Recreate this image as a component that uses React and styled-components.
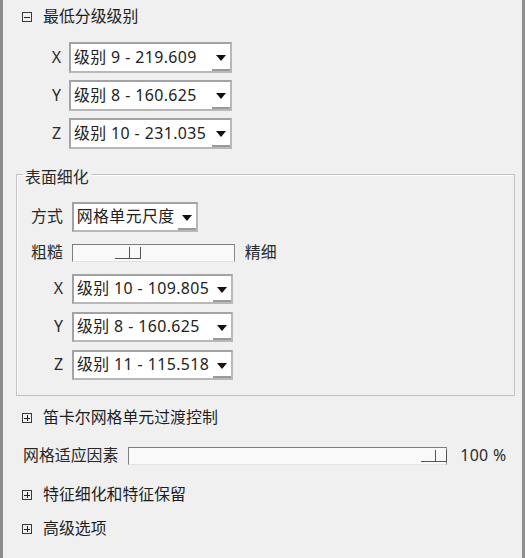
import React from "react";
import styled, { createGlobalStyle } from "styled-components";

const GlobalStyle = createGlobalStyle`
  html, body {
    margin: 0;
    padding: 0;
    background: #f0f0f0;
  }
  body {
    font-family: "Noto Sans", "Noto Sans CJK SC", sans-serif;
    color: #1e1e1e;
  }
`;

const Panel = styled.div`
  width: 525px;
  height: 558px;
  box-sizing: border-box;
  border-left: 3px solid #8b8b8b;
  border-right: 3px solid #8f8f8f;
  background: #f0f0f0;
  padding: 0 7px 0 13px;
  display: flex;
  flex-direction: column;
  font-size: 15.9px;
  overflow: hidden;
`;

const ExpandRow = styled.div`
  display: flex;
  align-items: center;
  height: 34px;
  flex-shrink: 0;
  margin-top: ${(p) => p.$top || 0}px;
  padding-left: 6px;
  gap: 11px;
  line-height: 1;
`;

const ExpandBox = styled.span`
  width: 8px;
  height: 8px;
  border: 1px solid #3a3a3a;
  display: flex;
  align-items: center;
  justify-content: center;
  position: relative;
  flex-shrink: 0;

  &::before {
    content: "";
    width: 6px;
    height: 1px;
    background: #222;
  }
  &::after {
    content: "";
    display: ${(p) => (p.$open ? "none" : "block")};
    position: absolute;
    width: 1px;
    height: 6px;
    background: #222;
  }
`;

const ComboList = styled.div`
  display: flex;
  flex-direction: column;
  gap: ${(p) => p.$gap || 8}px;
  margin-top: ${(p) => p.$top || 0}px;
`;

const FieldRow = styled.div`
  display: flex;
  align-items: center;
  height: ${(p) => p.$h || 31}px;
  padding-left: ${(p) => p.$indent}px;
  gap: ${(p) => p.$gap || 8}px;
  margin-top: ${(p) => p.$top || 0}px;
  flex-shrink: 0;
  line-height: 1;
`;

const AxisLabel = styled.span`
  width: 14px;
  text-align: right;
  color: #2a2a2a;
`;

const Combo = styled.div`
  width: ${(p) => p.$w}px;
  height: 100%;
  box-sizing: border-box;
  border: 2px solid #a3a3a3;
  border-right-color: #b8b8b8;
  border-bottom-color: #b8b8b8;
  background: #fff;
  display: flex;
  align-items: stretch;
`;

const ComboText = styled.span`
  flex: 1;
  display: flex;
  align-items: center;
  padding-left: 3px;
  white-space: nowrap;
  overflow: hidden;
  letter-spacing: 0.4px;
  color: #222;
`;

const ArrowButton = styled.span`
  width: 18px;
  flex-shrink: 0;
  display: flex;
  align-items: center;
  justify-content: center;
  border-bottom: 1px solid #9a9a9a;
  box-shadow: inset 1px -12px 0 -11px #9a9a9a;
  background: #fff;

  &::after {
    content: "";
    border-left: 5px solid transparent;
    border-right: 5px solid transparent;
    border-top: 6px solid #111;
    margin-top: 2px;
  }
`;

const GroupBox = styled.fieldset`
  margin: 12px 0 0 0;
  padding: 0 0 15px 0;
  border: 1px solid #c2c2c2;
  box-shadow: inset 1px 1px 0 #fbfbfb;
  display: flex;
  flex-direction: column;
  flex-shrink: 0;
  min-width: 0;
`;

const GroupTitle = styled.legend`
  margin-left: 6px;
  padding: 6px 2px 0 2px;
  line-height: 20px;
  color: #2a2a2a;
`;

const SideLabel = styled.span`
  white-space: nowrap;
  color: #2a2a2a;
`;

const Track = styled.div`
  width: ${(p) => p.$w}px;
  height: 100%;
  box-sizing: border-box;
  border: 1px solid #7e7e7e;
  border-right-color: #8a8a8a;
  border-bottom-color: #e2e2e2;
  background: #f9f9f9;
  position: relative;
`;

const Thumb = styled.div`
  position: absolute;
  bottom: 2px;
  height: 12px;
  display: flex;
`;

const ThumbPart = styled.span`
  width: ${(p) => p.$w}px;
  height: 100%;
  box-sizing: border-box;
  border-bottom: 1px solid #555;
  border-right: 1px solid #555;
`;

const Percent = styled.span`
  margin-left: 3px;
  letter-spacing: 0.3px;
  color: #2a2a2a;
`;

const ComboBox = ({ width, value }) => (
  <Combo $w={width}>
    <ComboText>{value}</ComboText>
    <ArrowButton />
  </Combo>
);

const Slider = ({ width, left }) => (
  <Track $w={width}>
    <Thumb style={{ left }}>
      <ThumbPart $w={15} />
      <ThumbPart $w={11} />
    </Thumb>
  </Track>
);

const Header = ({ open, top, children }) => (
  <ExpandRow $top={top}>
    <ExpandBox $open={open} />
    <span>{children}</span>
  </ExpandRow>
);

export default function App() {
  return (
    <>
      <GlobalStyle />
      <Panel>
        <Header open>最低分级级别</Header>
        <ComboList $top={8} $gap={7}>
          {[
            ["X", "级别 9 - 219.609"],
            ["Y", "级别 8 - 160.625"],
            ["Z", "级别 10 - 231.035"],
          ].map(([axis, value]) => (
            <FieldRow key={axis} $indent={31}>
              <AxisLabel>{axis}</AxisLabel>
              <ComboBox width={163} value={value} />
            </FieldRow>
          ))}
        </ComboList>

        <GroupBox>
          <GroupTitle>表面细化</GroupTitle>
          <FieldRow $indent={14} $gap={9} $h={30} $top={15}>
            <SideLabel>方式</SideLabel>
            <ComboBox width={126} value="网格单元尺度" />
          </FieldRow>
          <FieldRow $indent={14} $gap={9} $h={18} $top={12}>
            <SideLabel>粗糙</SideLabel>
            <Slider width={163} left={42} />
            <SideLabel style={{ marginLeft: 1 }}>精细</SideLabel>
          </FieldRow>
          <ComboList $top={12} $gap={8}>
            {[
              ["X", "级别 10 - 109.805"],
              ["Y", "级别 8 - 160.625"],
              ["Z", "级别 11 - 115.518"],
            ].map(([axis, value]) => (
              <FieldRow key={axis} $indent={32} $gap={9} $h={30}>
                <AxisLabel>{axis}</AxisLabel>
                <ComboBox width={161} value={value} />
              </FieldRow>
            ))}
          </ComboList>
        </GroupBox>

        <Header top={5}>笛卡尔网格单元过渡控制</Header>
        <FieldRow $indent={7} $gap={10} $h={34} $top={4}>
          <SideLabel>网格适应因素</SideLabel>
          <FieldRow $indent={0} $h={18} $gap={0}>
            <Slider width={319} left={292} />
          </FieldRow>
          <Percent>100 %</Percent>
        </FieldRow>
        <Header top={5}>特征细化和特征保留</Header>
        <Header>高级选项</Header>
      </Panel>
    </>
  );
}
